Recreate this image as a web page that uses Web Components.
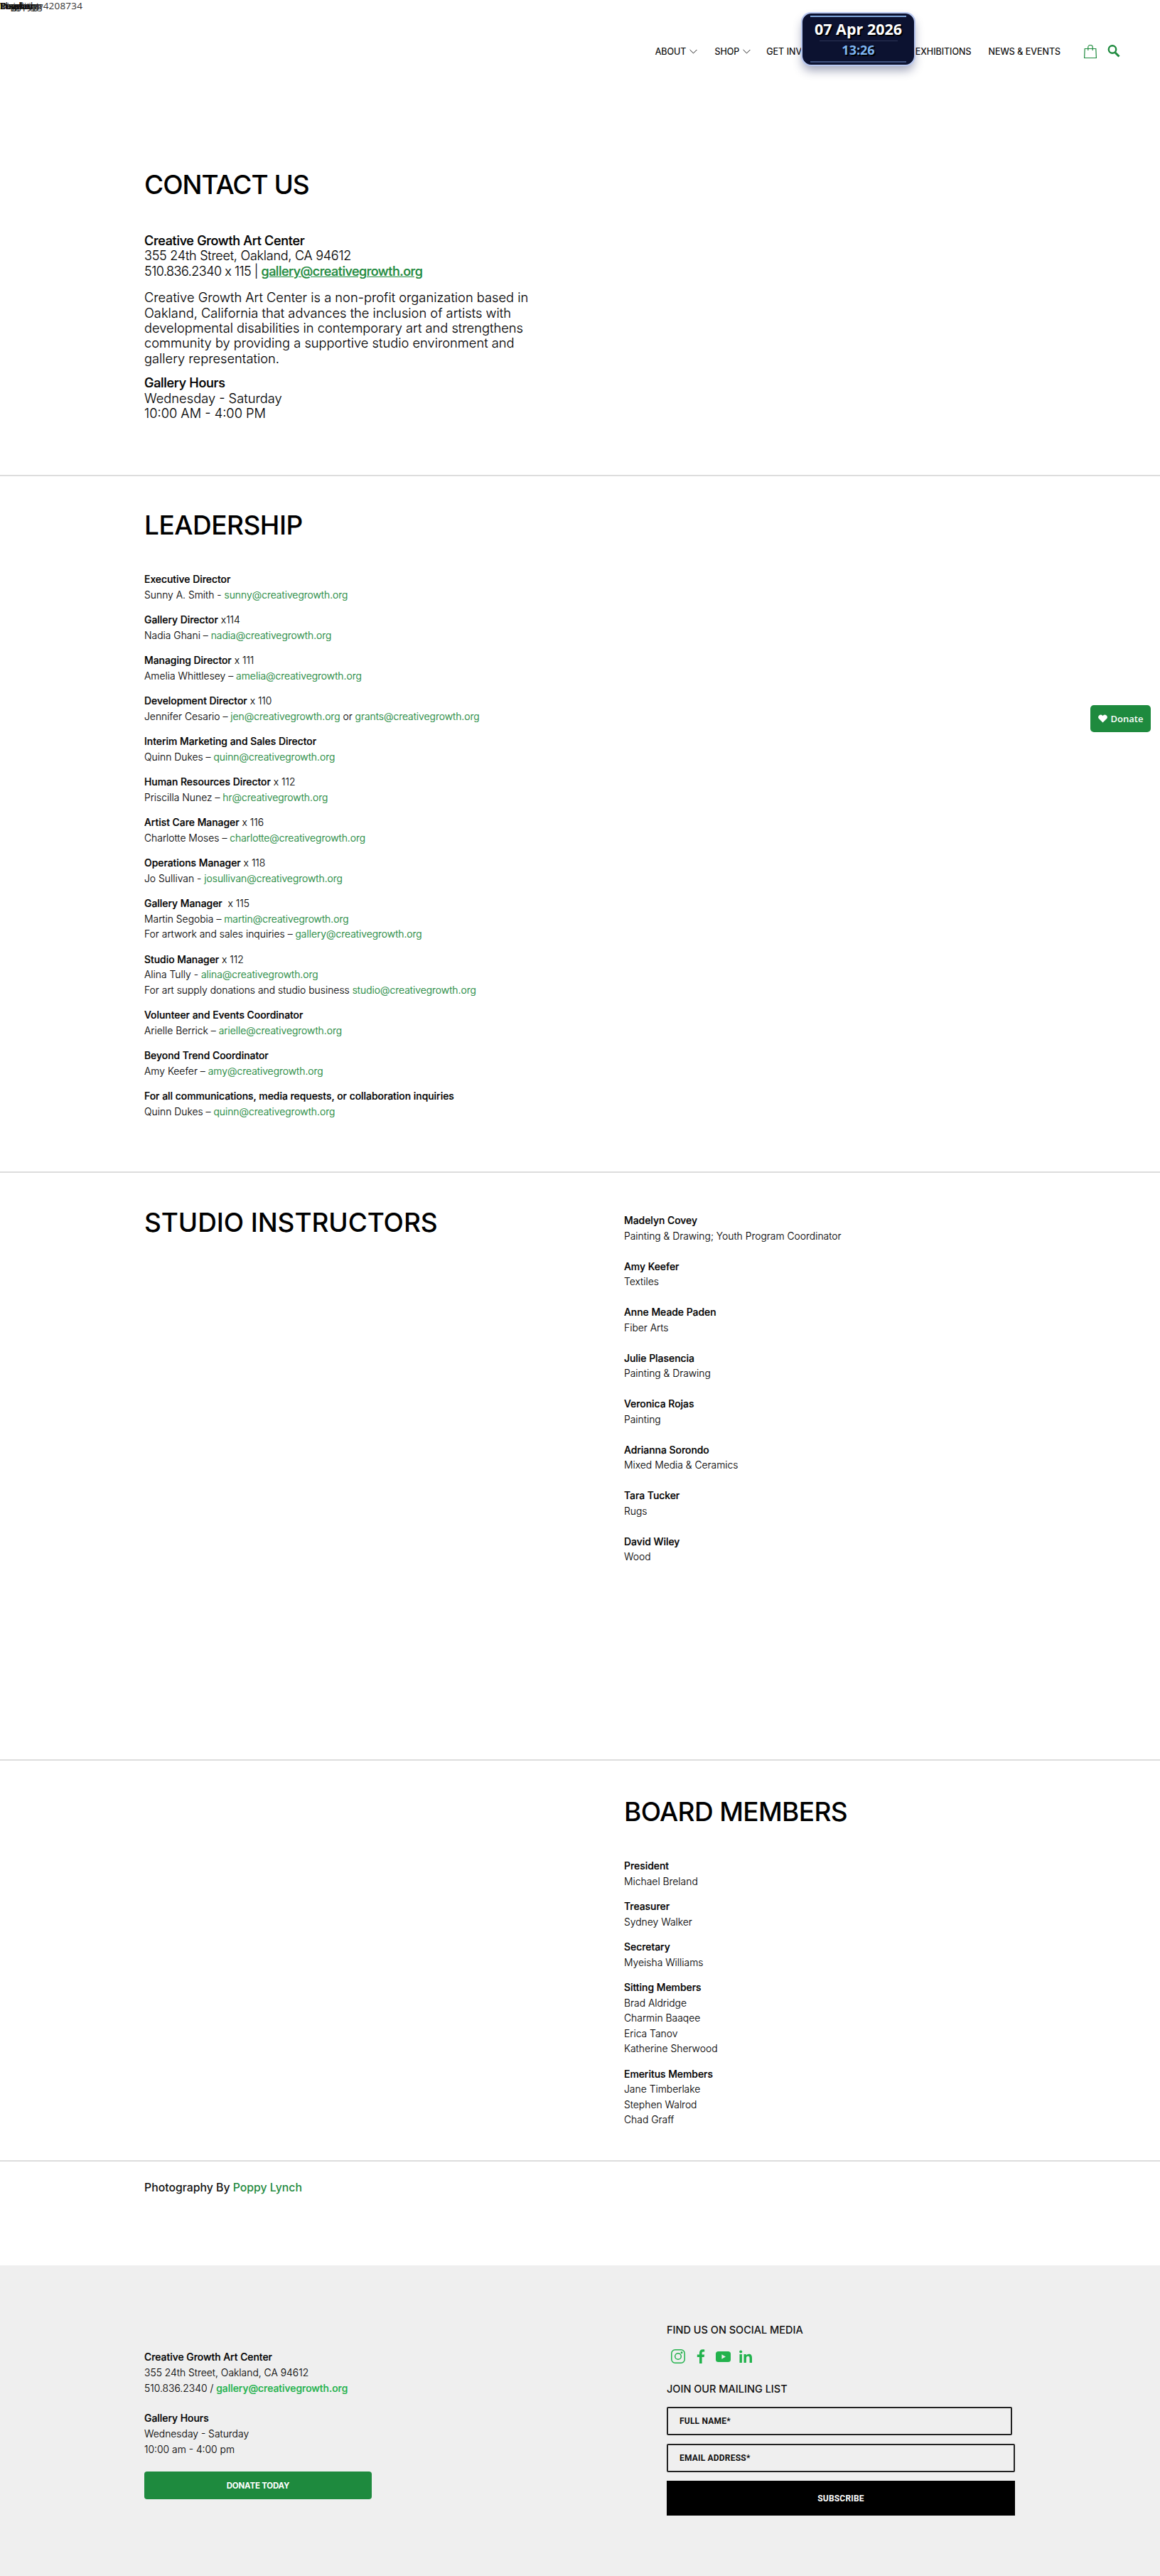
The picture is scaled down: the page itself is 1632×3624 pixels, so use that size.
<!DOCTYPE html>
<html lang="en">
<head>
<meta charset="utf-8">
<title>Contact Us</title>
<style>
  html, body { margin: 0; padding: 0; background: #fff; }
  body { font-family: "Inter", "Liberation Sans", sans-serif; color: #111; width: 1632px; height: 3624px; overflow: hidden; position: relative; }
</style>
</head>
<body>
<cg-stray-text></cg-stray-text>
<cg-header></cg-header>
<cg-clock></cg-clock>
<cg-donate-tab></cg-donate-tab>

<cg-contact></cg-contact>
<cg-leadership></cg-leadership>
<cg-instructors></cg-instructors>
<cg-board></cg-board>
<cg-credit></cg-credit>
<cg-footer></cg-footer>

<script>
const GREEN = '#1e8a3e';
const mail = (addr) => `<a href="#">${addr}</a>`;

// the overlapped strings at the very top left of the page
class CgStrayText extends HTMLElement {
    constructor() { super(); this.attachShadow({ mode: 'open' }); }
    connectedCallback() {
        const bits = ['Loading', 'Display', 'Pagead', 'Tracking', 'Insight', 'Pixel', 'Shopping', 'Payment', 'w4208734'];
        this.shadowRoot.innerHTML = `
            <style>
                :host { display: block; position: absolute; left: 0; top: 0; z-index: 2; font: 13.5px/16px "Open Sans", sans-serif; color: #111; }
                span { position: absolute; left: 0; top: 0; white-space: nowrap; }
                span.last { left: 50px; color: #333; letter-spacing: .2px; }
            </style>
            ${bits.map((b, i) => `<span class="${i === bits.length - 1 ? 'last' : ''}">${b}</span>`).join('')}
        `;
    }
}
customElements.define('cg-stray-text', CgStrayText);

class CgHeader extends HTMLElement {
    constructor() { super(); this.attachShadow({ mode: 'open' }); }
    connectedCallback() {
        const chev = `<svg width="11" height="7" viewBox="0 0 11 7" fill="none" stroke="#222" stroke-width="1"><path d="M.6 1l4.900 4.900L10.400 1"/></svg>`;
        this.shadowRoot.innerHTML = `
            <style>
                :host { display: flex; justify-content: flex-end; align-items: center; height: 144px; padding-right: 56px; box-sizing: border-box; font: 400 12.5px "Inter", sans-serif; color: #000; -webkit-text-stroke: .15px #000; }
                nav { display: flex; align-items: center; gap: 24px; margin-right: 33px; }
                nav span { display: flex; align-items: center; gap: 5px; white-space: nowrap; }
                nav .shop { margin-right: -2px; }
                nav .get { gap: 8px; }
                .icons { display: flex; align-items: center; gap: 15px; }
                svg { display: block; }
            </style>
            <nav>
                <span>ABOUT ${chev}</span>
                <span class="shop">SHOP ${chev}</span>
                <span class="get">GET INVOLVED ${chev}</span>
                <span>ARTISTS</span>
                <span>EXHIBITIONS</span>
                <span>NEWS &amp; EVENTS</span>
            </nav>
            <div class="icons">
                <svg width="18" height="19" viewBox="0 0 18 19" fill="none" stroke="${GREEN}" stroke-width="1.200"><path d="M1.200 5.500h15.600l.6 13H.6z"/><path d="M5.800 8V3.500a3.200 3 0 016.400 0V8"/></svg>
                <svg width="18" height="19" viewBox="0 0 18 19" fill="none" stroke="${GREEN}"><circle cx="7" cy="6.500" r="5.200" stroke-width="2.400"/><path d="M11 11l5.500 5.500" stroke-width="3"/></svg>
            </div>
        `;
    }
}
customElements.define('cg-header', CgHeader);

class CgClock extends HTMLElement {
    constructor() { super(); this.attachShadow({ mode: 'open' }); }
    connectedCallback() {
        this.shadowRoot.innerHTML = `
            <style>
                :host { display: flex; flex-direction: column; align-items: center; position: absolute; left: 1129px; top: 19px; width: 157px; height: 72px; box-sizing: border-box; padding: 2px 11px; z-index: 5;
                    background: #0c1230; border-radius: 12px; border: 1px solid #0c1230; color: #fff; font-family: "Open Sans", "Noto Sans", sans-serif;
                    box-shadow: 0 0 0 2px #b9c8f0, 0 8px 14px rgba(30,40,90,.42); }
                .bar { height: 2px; width: 135px; background: #7ea6dc; flex: none; }
                .bar.low { background: #3f517f; margin-top: auto; }
                .date { font-size: 21.5px; line-height: 28px; font-weight: 700; margin-top: 3px; text-shadow: 2px 2px 0 #000; white-space: nowrap; }
                .sep { width: 110px; height: 1px; background: #2c3558; margin-top: 2px; flex: none; }
                .time { font-size: 18px; line-height: 22px; font-weight: 700; color: #7fb6f2; text-shadow: 2px 2px 0 #000; margin-top: 1px; }
            </style>
            <div class="bar"></div>
            <div class="date">07 Apr 2026</div>
            <div class="sep"></div>
            <div class="time">13:26</div>
            <div class="bar low"></div>
        `;
    }
}
customElements.define('cg-clock', CgClock);

class CgDonateTab extends HTMLElement {
    constructor() { super(); this.attachShadow({ mode: 'open' }); }
    connectedCallback() {
        this.shadowRoot.innerHTML = `
            <style>
                :host { display: flex; align-items: center; justify-content: center; gap: 5px; position: absolute; left: 1534px; top: 992px; width: 85px; height: 38px; z-index: 4; background: ${GREEN}; border-radius: 5px; color: #fff; font: 600 13px "Open Sans", sans-serif; }
            </style>
            <svg width="13" height="12" viewBox="0 0 13 12" fill="#fff"><path d="M6.500 11.600L1.200 6.200A3.300 3.300 0 016 1.600l.5.6.5-.6a3.300 3.300 0 014.800 4.600z"/></svg>
            <span>Donate</span>
        `;
    }
}
customElements.define('cg-donate-tab', CgDonateTab);

// shared text styles for every section on the page
const sectionCss = `
    :host { box-sizing: border-box; }
    * { box-sizing: border-box; }
    h2 { margin: 0; font: 500 37px/48px "Inter", sans-serif; letter-spacing: -.5px; color: #000; white-space: nowrap; }
    p { margin: 0 0 14px; font: 300 13.9px/21.5px "Inter", sans-serif; color: #000; white-space: nowrap; -webkit-text-stroke: .1px #000; }
    b { font-weight: 500; font-size: 13.9px; color: #000; -webkit-text-stroke: .2px #000; }
    a { color: ${GREEN}; text-decoration: none; -webkit-text-stroke: .2px ${GREEN}; }
`;

class CgContact extends HTMLElement {
    constructor() { super(); this.attachShadow({ mode: 'open' }); }
    connectedCallback() {
        this.shadowRoot.innerHTML = `
            <style>
                ${sectionCss}
                :host { display: block; height: 526px; padding: 92px 0 0 203px; border-bottom: 2px solid #ddd; }
                h2 { margin-bottom: 44px; letter-spacing: -1px; }
                p { font-size: 18.3px; line-height: 21.400px; margin-bottom: 14px; }
                b { font-size: 18px; letter-spacing: -.3px; }
                .main { font-size: 18px; letter-spacing: -.25px; margin-bottom: 16px; }
                .tel { letter-spacing: -.5px; }
                .main a { font-weight: 500; text-decoration: underline; }
                .desc { margin-bottom: 13px; }
            </style>
            <h2>CONTACT US</h2>
            <p class="main"><b>Creative Growth Art Center</b><br>355 24th Street, Oakland, CA 94612<br><span class="tel">510.836.2340 x 115 | ${mail('gallery@creativegrowth.org')}</span></p>
            <p class="desc">Creative Growth Art Center is a non-profit organization based in<br>Oakland, California that advances the inclusion of artists with<br>developmental disabilities in contemporary art and strengthens<br>community by providing a supportive studio environment and<br>gallery representation.</p>
            <p><b>Gallery Hours</b><br>Wednesday - Saturday<br>10:00 AM - 4:00 PM</p>
        `;
    }
}
customElements.define('cg-contact', CgContact);

class CgLeadership extends HTMLElement {
    constructor() { super(); this.attachShadow({ mode: 'open' }); }
    connectedCallback() {
        const people = [
            ['Executive Director', '', `Sunny A. Smith - ${mail('sunny@creativegrowth.org')}`],
            ['Gallery Director', ' x114', `Nadia Ghani – ${mail('nadia@creativegrowth.org')}`],
            ['Managing Director', ' x 111', `Amelia Whittlesey – ${mail('amelia@creativegrowth.org')}`],
            ['Development Director', ' x 110', `Jennifer Cesario – ${mail('jen@creativegrowth.org')} or ${mail('grants@creativegrowth.org')}`],
            ['Interim Marketing and Sales Director', '', `Quinn Dukes – ${mail('quinn@creativegrowth.org')}`],
            ['Human Resources Director', ' x 112', `Priscilla Nunez – ${mail('hr@creativegrowth.org')}`],
            ['Artist Care Manager', ' x 116', `Charlotte Moses – ${mail('charlotte@creativegrowth.org')}`],
            ['Operations Manager', ' x 118', `Jo Sullivan - ${mail('josullivan@creativegrowth.org')}`],
            ['Gallery Manager', '&nbsp; x 115', `Martin Segobia – ${mail('martin@creativegrowth.org')}<br>For artwork and sales inquiries – ${mail('gallery@creativegrowth.org')}`],
            ['Studio Manager', ' x 112', `Alina Tully - ${mail('alina@creativegrowth.org')}<br>For art supply donations and studio business ${mail('studio@creativegrowth.org')}`],
            ['Volunteer and Events Coordinator', '', `Arielle Berrick – ${mail('arielle@creativegrowth.org')}`],
            ['Beyond Trend Coordinator', '', `Amy Keefer – ${mail('amy@creativegrowth.org')}`],
            ['For all communications, media requests, or collaboration inquiries', '', `Quinn Dukes – ${mail('quinn@creativegrowth.org')}`],
        ];
        this.shadowRoot.innerHTML = `
            <style>
                ${sectionCss}
                :host { display: block; height: 980px; padding: 45px 0 0 203px; border-bottom: 2px solid #ddd; }
                h2 { margin-bottom: 42px; }
            </style>
            <h2>LEADERSHIP</h2>
            ${people.map(([role, ext, line]) => `<p><b>${role}</b>${ext}<br>${line}</p>`).join('')}
        `;
    }
}
customElements.define('cg-leadership', CgLeadership);

class CgInstructors extends HTMLElement {
    constructor() { super(); this.attachShadow({ mode: 'open' }); }
    connectedCallback() {
        const staff = [
            ['Madelyn Covey', 'Painting &amp; Drawing; Youth Program Coordinator'],
            ['Amy Keefer', 'Textiles'],
            ['Anne Meade Paden', 'Fiber Arts'],
            ['Julie Plasencia', 'Painting &amp; Drawing'],
            ['Veronica Rojas', 'Painting'],
            ['Adrianna Sorondo', 'Mixed Media &amp; Ceramics'],
            ['Tara Tucker', 'Rugs'],
            ['David Wiley', 'Wood'],
        ];
        this.shadowRoot.innerHTML = `
            <style>
                ${sectionCss}
                :host { display: grid; grid-template-columns: 675px 1fr; height: 827px; padding: 46px 0 0 203px; border-bottom: 2px solid #ddd; align-items: start; }
                h2 { letter-spacing: -.1px; }
                p { margin-bottom: 21.500px; }
                .list { padding-top: 11px; }
            </style>
            <h2>STUDIO INSTRUCTORS</h2>
            <div class="list">${staff.map(([n, t]) => `<p><b>${n}</b><br>${t}</p>`).join('')}</div>
        `;
    }
}
customElements.define('cg-instructors', CgInstructors);

class CgBoard extends HTMLElement {
    constructor() { super(); this.attachShadow({ mode: 'open' }); }
    connectedCallback() {
        const groups = [
            ['President', ['Michael Breland']],
            ['Treasurer', ['Sydney Walker']],
            ['Secretary', ['Myeisha Williams']],
            ['Sitting Members', ['Brad Aldridge', 'Charmin Baaqee', 'Erica Tanov', 'Katherine Sherwood']],
            ['Emeritus Members', ['Jane Timberlake', 'Stephen Walrod', 'Chad Graff']],
        ];
        this.shadowRoot.innerHTML = `
            <style>
                ${sectionCss}
                :host { display: block; height: 564px; padding: 48px 0 0 878px; border-bottom: 2px solid #ddd; }
                h2 { margin-bottom: 42px; letter-spacing: -.65px; }
            </style>
            <h2>BOARD MEMBERS</h2>
            ${groups.map(([t, names]) => `<p><b>${t}</b><br>${names.join('<br>')}</p>`).join('')}
        `;
    }
}
customElements.define('cg-board', CgBoard);

class CgCredit extends HTMLElement {
    constructor() { super(); this.attachShadow({ mode: 'open' }); }
    connectedCallback() {
        this.shadowRoot.innerHTML = `
            <style>
                ${sectionCss}
                :host { display: block; height: 146px; padding: 26px 0 0 203px; font: 500 15.8px/22px "Inter", sans-serif; color: #111; }
                a { -webkit-text-stroke: 0; }
            </style>
            Photography By ${mail('Poppy Lynch')}
        `;
    }
}
customElements.define('cg-credit', CgCredit);

class CgFooter extends HTMLElement {
    constructor() { super(); this.attachShadow({ mode: 'open' }); }
    connectedCallback() {
        const C = '#22b24c';
        this.shadowRoot.innerHTML = `
            <style>
                ${sectionCss}
                :host { display: grid; grid-template-columns: 735px 1fr; height: 437px; padding: 0 0 0 203px; background: #efefef; }
                .left { padding-top: 118px; }
                p { margin-bottom: 20px; font-size: 13.9px; line-height: 22px; }
                p a { color: ${C}; font-weight: 500; -webkit-text-stroke: .2px ${C}; }
                .give { display: flex; align-items: center; justify-content: center; width: 320px; height: 39px; margin-top: 1px; background: ${GREEN}; border-radius: 4px; color: #fff; font: 700 11.5px "Inter", sans-serif; letter-spacing: -.2px; }
                .right { padding-top: 81px; }
                h3 { margin: 0; font: 500 14.5px/20px "Inter", sans-serif; color: #111; white-space: nowrap; }
                .social { display: flex; align-items: center; gap: 12px; height: 24px; margin: 15px 0 24px 6px; }
                .social .f { margin: 0 3px 0 4px; }
                .field { display: flex; align-items: center; height: 40px; padding-left: 16px; border: 2px solid #222; border-radius: 2px; font: 700 12px Roboto, sans-serif; color: #111; letter-spacing: .2px; }
                .name { width: 486px; margin: 15px 0 12px; }
                .email { width: 490px; margin-bottom: 12px; }
                .sub { display: flex; align-items: center; justify-content: center; width: 490px; height: 49px; background: #000; color: #fff; font: 700 12px Roboto, sans-serif; letter-spacing: .2px; }
                svg { display: block; }
            </style>
            <div class="left">
                <p><b>Creative Growth Art Center</b><br>355 24th Street, Oakland, CA 94612<br>510.836.2340 / ${mail('gallery@creativegrowth.org')}</p>
                <p><b>Gallery Hours</b><br>Wednesday - Saturday<br>10:00 am - 4:00 pm</p>
                <div class="give">DONATE TODAY</div>
            </div>
            <div class="right">
                <h3>FIND US ON SOCIAL MEDIA</h3>
                <div class="social">
                    <svg width="20" height="20" viewBox="0 0 20 20" fill="none" stroke="${C}" stroke-width="1.500"><rect x=".8" y=".8" width="18.400" height="18.400" rx="5"/><circle cx="10" cy="10" r="4.300"/><circle cx="15" cy="4.800" r=".7" fill="${C}"/></svg>
                    <svg class="f" width="12" height="20" viewBox="0 0 12 20" fill="${C}"><path d="M4 20v-9H.8V7.600H4V5c0-3 1.800-4.800 4.600-4.800 1 0 2 .1 2.600.2v3.100H9.400C8 3.500 7.600 4.200 7.600 5.300V7.600h3.500l-.5 3.400H7.600v9z"/></svg>
                    <svg width="21" height="15" viewBox="0 0 20 15" fill="${C}" preserveAspectRatio="none"><path fill-rule="evenodd" d="M3.500 0h13A3.500 3.500 0 0120 3.500v8a3.500 3.500 0 01-3.500 3.500h-13A3.500 3.500 0 010 11.500v-8A3.500 3.500 0 013.500 0zM8 4.300v6.400l5.300-3.200z"/></svg>
                    <svg width="18" height="18" viewBox="0 0 18 18" fill="${C}"><circle cx="2.200" cy="2.400" r="2"/><rect x=".5" y="6" width="3.400" height="12"/><path d="M6.500 6h3.300v1.700C10.500 6.500 12 5.700 13.600 5.700c3.200 0 4.400 2 4.400 5.300v7h-3.400v-6.300c0-1.700-.5-3-2.200-3-1.800 0-2.500 1.300-2.500 3V18H6.500z"/></svg>
                </div>
                <h3>JOIN OUR MAILING LIST</h3>
                <div class="field name">FULL NAME*</div>
                <div class="field email">EMAIL ADDRESS*</div>
                <div class="sub">SUBSCRIBE</div>
            </div>
        `;
    }
}
customElements.define('cg-footer', CgFooter);
</script>
</body>
</html>
